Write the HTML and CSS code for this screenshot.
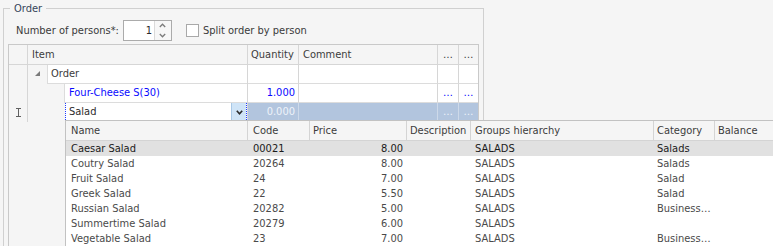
FILE: index.html
```html
<!DOCTYPE html>
<html>
<head>
<meta charset="utf-8">
<link rel="stylesheet" href="styles.css">
</head>
<body>
<fieldset class="group">
  <legend class="legend">Order</legend>
  <div class="opts">
    <span class="lbl persons">Number of persons*:</span>
    <div class="spin">
      <span class="spin-val">1</span>
      <div class="spin-btns">
        <span class="spin-b"><svg width="7" height="5" viewBox="0 0 7 5"><polyline points="0.8,4 3.5,1.2 6.2,4" fill="none" stroke="#7b7b7b" stroke-width="1.3"/></svg></span>
        <span class="spin-b"><svg width="7" height="5" viewBox="0 0 7 5"><polyline points="0.8,1 3.5,3.8 6.2,1" fill="none" stroke="#7b7b7b" stroke-width="1.3"/></svg></span>
      </div>
    </div>
    <span class="check"></span>
    <span class="lbl">Split order by person</span>
  </div>

  <div class="grid">
    <div class="row head">
      <div class="c ind"></div>
      <div class="c item">Item</div>
      <div class="c qty">Quantity</div>
      <div class="c cmt">Comment</div>
      <div class="c d1">…</div>
      <div class="c d2">…</div>
    </div>

    <div class="row">
      <div class="c ind"></div>
      <div class="c item tree">
        <span class="exp"><svg width="5" height="5" viewBox="0 0 5 5"><polygon points="5,0 5,5 0,5" fill="#7a7a7a"/></svg></span>
        <span class="cell lvl0">Order</span>
      </div>
      <div class="c qty data"></div>
      <div class="c cmt data"></div>
      <div class="c d1 data"></div>
      <div class="c d2 data"></div>
    </div>

    <div class="row">
      <div class="c ind"></div>
      <div class="c item tree">
        <span class="indent1"></span>
        <span class="cell lvl1 blue">Four-Cheese S(30)</span>
      </div>
      <div class="c qty data blue">1.000</div>
      <div class="c cmt data"></div>
      <div class="c d1 data blue">…</div>
      <div class="c d2 data blue">…</div>
    </div>

    <div class="row sel">
      <div class="c ind"><svg width="5" height="9" viewBox="0 0 5 9"><path d="M0 0.5H5M0 8.5H5M2.5 0.5V8.5" fill="none" stroke="#606060" stroke-width="1"/></svg></div>
      <div class="c item tree">
        <span class="indent2"></span>
        <span class="editor">
          <span class="editor-text">Salad</span>
          <span class="dd-btn"><svg width="7" height="5" viewBox="0 0 7 5"><polyline points="0.8,0.8 3.5,3.8 6.2,0.8" fill="none" stroke="#2b2b2b" stroke-width="1.6"/></svg></span>
        </span>
      </div>
      <div class="c qty data">0.000</div>
      <div class="c cmt data"></div>
      <div class="c d1 data">…</div>
      <div class="c d2 data">…</div>
    </div>
  </div>
</fieldset>

<div class="popup">
  <div class="prow phead">
    <div class="p name">Name</div>
    <div class="p code">Code</div>
    <div class="p price">Price</div>
    <div class="p desc">Description</div>
    <div class="p grp">Groups hierarchy</div>
    <div class="p cat">Category</div>
    <div class="p bal">Balance</div>
  </div>
  <div class="prow pdata focus">
    <div class="p name">Caesar Salad</div>
    <div class="p code">00021</div>
    <div class="p price num">8.00</div>
    <div class="p desc"></div>
    <div class="p grp">SALADS</div>
    <div class="p cat">Salads</div>
    <div class="p bal"></div>
  </div>
  <div class="prow pdata">
    <div class="p name">Coutry Salad</div>
    <div class="p code">20264</div>
    <div class="p price num">8.00</div>
    <div class="p desc"></div>
    <div class="p grp">SALADS</div>
    <div class="p cat">Salads</div>
    <div class="p bal"></div>
  </div>
  <div class="prow pdata">
    <div class="p name">Fruit Salad</div>
    <div class="p code">24</div>
    <div class="p price num">7.00</div>
    <div class="p desc"></div>
    <div class="p grp">SALADS</div>
    <div class="p cat">Salad</div>
    <div class="p bal"></div>
  </div>
  <div class="prow pdata">
    <div class="p name">Greek Salad</div>
    <div class="p code">22</div>
    <div class="p price num">5.50</div>
    <div class="p desc"></div>
    <div class="p grp">SALADS</div>
    <div class="p cat">Salad</div>
    <div class="p bal"></div>
  </div>
  <div class="prow pdata">
    <div class="p name">Russian Salad</div>
    <div class="p code">20282</div>
    <div class="p price num">5.00</div>
    <div class="p desc"></div>
    <div class="p grp">SALADS</div>
    <div class="p cat">Business…</div>
    <div class="p bal"></div>
  </div>
  <div class="prow pdata">
    <div class="p name">Summertime Salad</div>
    <div class="p code">20279</div>
    <div class="p price num">6.00</div>
    <div class="p desc"></div>
    <div class="p grp">SALADS</div>
    <div class="p cat"></div>
    <div class="p bal"></div>
  </div>
  <div class="prow pdata">
    <div class="p name">Vegetable Salad</div>
    <div class="p code">23</div>
    <div class="p price num">7.00</div>
    <div class="p desc"></div>
    <div class="p grp">SALADS</div>
    <div class="p cat">Business…</div>
    <div class="p bal"></div>
  </div>
</div>
</body>
</html>
```

FILE: styles.css
```css
* { box-sizing: border-box; }
html, body { margin: 0; padding: 0; }
body {
  width: 773px;
  height: 246px;
  overflow: hidden;
  position: relative;
  background: #f5f5f5;
  font-family: "DejaVu Sans Condensed", "DejaVu Sans", sans-serif;
  font-stretch: condensed;
  font-size: 11px;
  line-height: 15px;
  color: #3b3b3b;
}

/* group box (continues below the visible frame) */
.group {
  margin: 0 0 0 3px;
  width: 481px;
  height: 246px;
  border: 1px solid #d0d0d0;
  border-bottom: none;
  padding: 0 4px;
  min-width: 0;
}
.legend {
  margin-left: 2px;
  padding: 0 4px;
  line-height: 17px;
  color: #35455a;
}

.opts {
  display: flex;
  align-items: center;
  height: 21px;
  margin: 3px 0;
  padding-left: 8px;
}
.lbl { white-space: nowrap; color: #3a3a3a; }
.persons { margin-right: 4px; }

.spin {
  display: flex;
  width: 49px;
  height: 21px;
  border: 1px solid #ababab;
  background: #fff;
}
.spin-val {
  flex: 1;
  text-align: right;
  padding-right: 2px;
  line-height: 19px;
  color: #2a2a2a;
}
.spin-btns {
  width: 17px;
  display: flex;
  flex-direction: column;
  border-left: 1px solid #dadada;
  background: #f7f7f7;
}
.spin-b {
  flex: 1;
  display: flex;
  align-items: center;
  justify-content: center;
}
.spin-b svg { display: block; }

.check {
  width: 13px;
  height: 13px;
  border: 1px solid #a9a9a9;
  background: #fff;
  margin: 0 4px 0 14px;
}

/* tree grid */
.grid {
  width: 471px;
  height: 202px;
  border: 1px solid #c9c9c9;
  border-bottom: none;
}
.row {
  display: flex;
  height: 19px;
}
.c {
  height: 100%;
  border-right: 1px solid #d6d6d6;
  line-height: 18px;
  white-space: nowrap;
  overflow: hidden;
}
.ind { width: 19px; display: flex; align-items: center; justify-content: center; }
.item { width: 220px; }
.qty { width: 51px; text-align: right; padding-right: 3px; }
.cmt { width: 139px; }
.d1 { width: 21px; text-align: center; }
.d2 { width: 19px; text-align: center; border-right: none; }

.head {
  height: 20px;
  background: #f5f5f5;
  border-bottom: 1px solid #d6d6d6;
}
.head .c { line-height: 19px; color: #3c3c3c; }
.head .item { padding-left: 4px; }
.head .qty { text-align: left; padding-left: 3px; padding-right: 0; }
.head .cmt { padding-left: 4px; }

.data {
  background: #fff;
  border-bottom: 1px solid #dcdcdc;
}
.blue { color: #0a0aff; }

.tree { display: flex; }
.exp {
  width: 19px;
  display: flex;
  align-items: center;
  justify-content: center;
  padding-bottom: 2px;
}
.indent1 { width: 36px; }
.indent2 { width: 37px; }
.cell {
  flex: 1;
  background: #fff;
  border-left: 1px solid #dcdcdc;
  border-bottom: 1px solid #dcdcdc;
}
.lvl0 { padding-left: 3px; }
.lvl1 { padding-left: 4px; }

.sel .data {
  background: #b2c5de;
  color: #eef3fa;
  border-bottom-color: #b2c5de;
  border-right-color: #cdd9e9;
}
.editor {
  flex: 1;
  display: flex;
  margin-top: -1px;
  height: 20px;
  background: #fff;
  border: 1px dotted #1f3cff;
}
.editor-text { flex: 1; padding-left: 3px; line-height: 17px; color: #2b2b2b; }
.dd-btn {
  width: 15px;
  background: #cfe4f7;
  border-left: 1px solid #a8c8e6;
  display: flex;
  align-items: center;
  justify-content: center;
}

/* dropdown popup (continues past the right and bottom edges) */
.popup {
  position: absolute;
  left: 65px;
  top: 120px;
  width: 708px;
  height: 126px;
  overflow: hidden;
  background: #fff;
  border: 1px solid #c2c2c2;
  border-right: none;
  border-bottom: none;
}
.prow { display: flex; }
.p {
  white-space: nowrap;
  overflow: hidden;
  padding-left: 4px;
}
.name { width: 182px; padding-left: 5px; }
.code { width: 62px; padding-left: 5px; }
.price { width: 97px; padding-left: 3px; }
.desc { width: 64px; padding-left: 3px; }
.grp { width: 183px; padding-left: 4px; }
.cat { width: 61px; padding-left: 3px; }
.bal { flex: 1; padding-left: 3px; }
.num { text-align: right; padding-right: 4px; padding-left: 0; }

.phead {
  height: 20px;
  background: #f5f5f5;
  border-bottom: 1px solid #d4d4d4;
}
.phead .p {
  line-height: 19px;
  border-right: 1px solid #d4d4d4;
  color: #3c3c3c;
}
.phead .bal { border-right: none; }
.pdata { height: 15px; color: #4a4a4a; }
.pdata .p { line-height: 15px; }
.focus { background: #e1e1e1; color: #1a1a1a; }
```
